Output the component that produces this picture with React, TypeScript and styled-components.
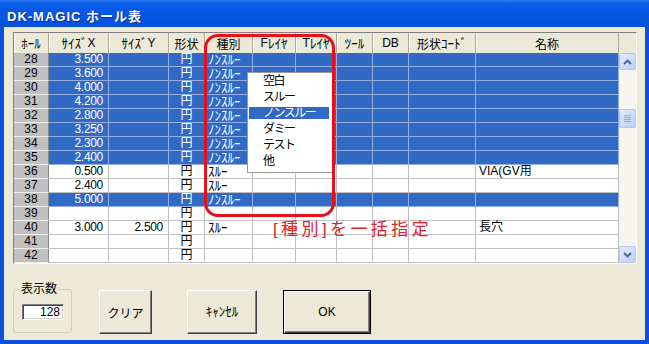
import styled, { createGlobalStyle } from "styled-components";

const GlobalStyle = createGlobalStyle`
  html, body {
    margin: 0;
    padding: 0;
    background: #ece9d8;
  }
  body {
    font-family: "Liberation Sans", "Noto Sans CJK JP", sans-serif;
    font-size: 12px;
    color: #000;
  }
`;

const COLS = "35px 60px 60px 36px 48px 43px 41px 36px 36px 67px 143px";
const BLUE = "#316ac5";

const Window = styled.div`
  width: 649px;
  height: 344px;
  display: flex;
  flex-direction: column;
  overflow: hidden;
`;

const TitleBar = styled.div`
  flex-shrink: 0;
  height: 27px;
  box-sizing: border-box;
  padding: 3px 0 0 7px;
  display: flex;
  align-items: center;
  background: linear-gradient(#2a78f4 0%, #0a5de8 12%, #0657e4 50%, #0453df 85%, #0a4ed6 100%);
  color: #fff;
  font-weight: bold;
  font-size: 13px;
  letter-spacing: 1px;
  text-shadow: 1px 1px #0a2f8c;
`;

const Body = styled.div`
  flex: 1;
  min-height: 0;
  display: flex;
  flex-direction: column;
  background: #ece9d8;
  border: 4px solid #0a50dc;
  border-top: none;
  padding: 5px 8px 0 9px;
`;

const GridFrame = styled.div`
  position: relative;
  display: flex;
  flex-shrink: 0;
  width: 624px;
  box-sizing: border-box;
  border: 1px solid;
  border-color: #808080 #ffffff #ffffff #808080;
`;

const GridBody = styled.div`
  width: 605px;
  display: flex;
  flex-direction: column;
`;

const HeaderRow = styled.div`
  display: grid;
  grid-template-columns: ${COLS};
  grid-template-rows: 20px;
  height: 20px;
  background: #ece9d8;
`;

const HeadCell = styled.div`
  display: flex;
  align-items: center;
  justify-content: center;
  border-right: 1px solid #aca899;
  box-shadow: inset 1px 0 #ffffff;
  white-space: nowrap;
`;

// half-width katakana need a slightly larger size to look like the dialog font
const Hw = styled.span`
  display: inline-block;
  font-size: 13px;
  line-height: 13px;
  vertical-align: top;
`;

const RowHead = styled.div`
  background: #c0c0c0;
  border-right: 1px solid #8a8a8a;
  border-bottom: 1px solid #f0f0f0;
  text-align: center;
  line-height: 13px;
  font-size: 12px;
  color: #000;
`;

const Cell = styled.div<{ $align?: "left" | "right" | "center" }>`
  border-right: 1px solid;
  border-bottom: 1px solid;
  line-height: 13px;
  white-space: nowrap;
  text-align: ${(p) => p.$align ?? "left"};
  padding: ${(p) => (p.$align === "right" ? "0 5px 0 0" : p.$align === "center" ? "0" : "0 0 0 3px")};
  letter-spacing: ${(p) => (p.$align === "right" ? "-0.3px" : "0")};
`;

const DataRow = styled.div<{ $sel: boolean }>`
  display: grid;
  grid-template-columns: ${COLS};
  grid-template-rows: 14px;
  height: 14px;
  background: ${(p) => (p.$sel ? BLUE : "#ffffff")};
  color: ${(p) => (p.$sel ? "#ffffff" : "#000000")};
  ${Cell} {
    border-color: ${(p) => (p.$sel ? "#93afe4" : "#c0c0c0")};
  }
`;

const ScrollCol = styled.div`
  width: 17px;
  display: flex;
  flex-direction: column;
`;

const ScrollHead = styled.div`
  height: 20px;
  background: #ece9d8;
`;

const Track = styled.div`
  flex: 1;
  display: flex;
  flex-direction: column;
  background: #f6f5f0;
`;

const ArrowBtn = styled.div`
  height: 17px;
  box-sizing: border-box;
  border: 1px solid #b3c6f3;
  border-radius: 2px;
  background: linear-gradient(135deg, #e2eafe, #bccefa);
  display: flex;
  align-items: center;
  justify-content: center;
`;

const Thumb = styled(ArrowBtn)`
  margin-top: 39px;
  height: 19px;
`;

const TrackFill = styled.div`
  flex: 1;
`;

const Dropdown = styled.div`
  position: absolute;
  left: 233px;
  top: 39px;
  width: 86px;
  box-sizing: border-box;
  border: 1px solid #9a9a9a;
  background: #ffffff;
  padding: 2px 3px 5px 1px;
  display: flex;
  flex-direction: column;
  gap: 4px;
  z-index: 2;
`;

const DropItem = styled.div<{ $active?: boolean }>`
  height: 12px;
  line-height: 12px;
  padding-left: 14px;
  letter-spacing: -1.5px;
  background: ${(p) => (p.$active ? BLUE : "transparent")};
  color: ${(p) => (p.$active ? "#ffffff" : "#000000")};
`;

const RedBox = styled.div`
  position: absolute;
  left: 190px;
  top: 1px;
  width: 131px;
  height: 183px;
  box-sizing: border-box;
  border: 3px solid #e8101a;
  border-radius: 14px;
  z-index: 3;
  pointer-events: none;
`;

const Note = styled.div`
  position: absolute;
  left: 259px;
  top: 187px;
  font-size: 17px;
  line-height: 20px;
  letter-spacing: 3.4px;
  color: #e0222a;
  white-space: nowrap;
  z-index: 3;
`;

const Footer = styled.div`
  display: flex;
  align-items: flex-start;
  margin-top: 18px;
`;

const GroupBox = styled.fieldset`
  margin: 0;
  width: 59px;
  min-width: 0;
  box-sizing: border-box;
  padding: 8px 7px 12px 8px;
  border: 1px solid #d0d0bf;
  border-radius: 3px;
`;

const Legend = styled.legend`
  padding: 0 1px;
  margin-left: -2px;
  line-height: 14px;
  font-size: 12px;
  white-space: nowrap;
`;

const CountBox = styled.div`
  width: 42px;
  height: 16px;
  box-sizing: border-box;
  border: 1px solid;
  border-color: #808080 #ffffff #ffffff #808080;
  box-shadow: inset 1px 1px #404040, inset -1px -1px #d4d0c8;
  background: #ffffff;
  text-align: right;
  padding-right: 3px;
  line-height: 14px;
`;

const Button = styled.button<{ $w: number; $ml: number; $primary?: boolean }>`
  width: ${(p) => p.$w}px;
  height: 44px;
  margin: 8px 0 0 ${(p) => p.$ml}px;
  padding: 0;
  background: #ece9d8;
  font-family: inherit;
  font-size: 12px;
  color: #000;
  border: 1px solid;
  border-color: ${(p) => (p.$primary ? "#000000" : "#ffffff #404040 #404040 #ffffff")};
  box-shadow: ${(p) =>
    p.$primary
      ? "inset 1px 1px #ffffff, inset -1px -1px #404040, inset -2px -2px #808080"
      : "inset -1px -1px #808080"};
`;

type Row = { no: number; x?: string; y?: string; kind?: string; name?: string; sel?: boolean };

const rows: Row[] = [
  { no: 28, x: "3.500", kind: "ﾉﾝｽﾙｰ", sel: true },
  { no: 29, x: "3.600", kind: "ﾉﾝｽﾙｰ", sel: true },
  { no: 30, x: "4.000", kind: "ﾉﾝｽﾙｰ", sel: true },
  { no: 31, x: "4.200", kind: "ﾉﾝｽﾙｰ", sel: true },
  { no: 32, x: "2.800", kind: "ﾉﾝｽﾙｰ", sel: true },
  { no: 33, x: "3.250", kind: "ﾉﾝｽﾙｰ", sel: true },
  { no: 34, x: "2.300", kind: "ﾉﾝｽﾙｰ", sel: true },
  { no: 35, x: "2.400", kind: "ﾉﾝｽﾙｰ", sel: true },
  { no: 36, x: "0.500", kind: "ｽﾙｰ", name: "VIA(GV用" },
  { no: 37, x: "2.400", kind: "ｽﾙｰ" },
  { no: 38, x: "5.000", kind: "ﾉﾝｽﾙｰ", sel: true },
  { no: 39 },
  { no: 40, x: "3.000", y: "2.500", kind: "ｽﾙｰ", name: "長穴" },
  { no: 41 },
  { no: 42 },
];

const kinds = ["空白", "スルー", "ノンスルー", "ダミー", "テスト", "他"];

function Chevron({ up }: { up?: boolean }) {
  return (
    <svg width="9" height="6" viewBox="0 0 9 6">
      <polyline
        points={up ? "1,5 4.5,1.5 8,5" : "1,1 4.5,4.5 8,1"}
        fill="none"
        stroke="#4d6185"
        strokeWidth="1.8"
      />
    </svg>
  );
}

function Grip() {
  return (
    <svg width="7" height="8" viewBox="0 0 7 8">
      {[0, 2, 4, 6].map((y) => (
        <line key={y} x1="0" x2="7" y1={y + 0.5} y2={y + 0.5} stroke="#8fa8e0" />
      ))}
    </svg>
  );
}

export default function App() {
  return (
    <Window>
      <GlobalStyle />
      <TitleBar>DK-MAGIC ホール表</TitleBar>
      <Body>
        <GridFrame>
          <GridBody>
            <HeaderRow>
              <HeadCell><Hw>ﾎｰﾙ</Hw></HeadCell>
              <HeadCell><Hw>ｻｲｽﾞ</Hw>X</HeadCell>
              <HeadCell><Hw>ｻｲｽﾞ</Hw>Y</HeadCell>
              <HeadCell>形状</HeadCell>
              <HeadCell>種別</HeadCell>
              <HeadCell>F<Hw>ﾚｲﾔ</Hw></HeadCell>
              <HeadCell>T<Hw>ﾚｲﾔ</Hw></HeadCell>
              <HeadCell><Hw>ﾂｰﾙ</Hw></HeadCell>
              <HeadCell>DB</HeadCell>
              <HeadCell>形状<Hw>ｺｰﾄﾞ</Hw></HeadCell>
              <HeadCell>名称</HeadCell>
            </HeaderRow>
            {rows.map((r) => (
              <DataRow key={r.no} $sel={!!r.sel}>
                <RowHead>{r.no}</RowHead>
                <Cell $align="right">{r.x}</Cell>
                <Cell $align="right">{r.y}</Cell>
                <Cell $align="center">円</Cell>
                <Cell>{r.kind && <Hw>{r.kind}</Hw>}</Cell>
                <Cell />
                <Cell />
                <Cell />
                <Cell />
                <Cell />
                <Cell>{r.name}</Cell>
              </DataRow>
            ))}
          </GridBody>
          <ScrollCol>
            <ScrollHead />
            <Track>
              <ArrowBtn>
                <Chevron up />
              </ArrowBtn>
              <Thumb>
                <Grip />
              </Thumb>
              <TrackFill />
              <ArrowBtn>
                <Chevron />
              </ArrowBtn>
            </Track>
          </ScrollCol>

          <Dropdown>
            {kinds.map((k) => (
              <DropItem key={k} $active={k === "ノンスルー"}>
                {k}
              </DropItem>
            ))}
          </Dropdown>
          <RedBox />
          <Note>[種別]を一括指定</Note>
        </GridFrame>

        <Footer>
          <GroupBox>
            <Legend>表示数</Legend>
            <CountBox>128</CountBox>
          </GroupBox>
          <Button $w={53} $ml={27}>クリア</Button>
          <Button $w={70} $ml={35}><Hw>ｷｬﾝｾﾙ</Hw></Button>
          <Button $w={88} $ml={26} $primary>
            OK
          </Button>
        </Footer>
      </Body>
    </Window>
  );
}
